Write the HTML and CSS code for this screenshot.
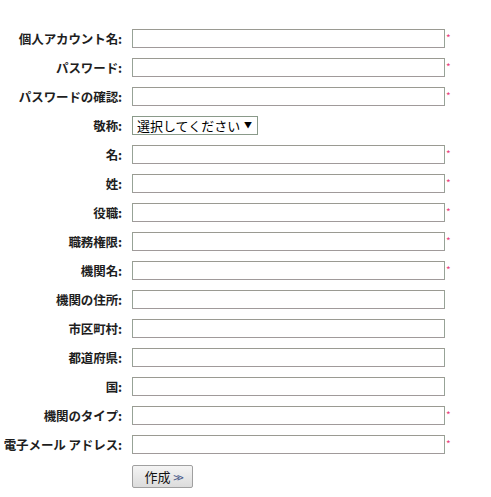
FILE: index.html
```html
<!DOCTYPE html>
<html lang="ja">
<head>
  <meta charset="UTF-8" />
  <title>アカウント作成</title>
  <link rel="stylesheet" href="styles.css">
</head>
<body>
  <form class="account-form">
    <label class="field-label">個人アカウント名:</label>
    <div class="field"><input type="text" class="text-input"><span class="req">*</span></div>

    <label class="field-label">パスワード:</label>
    <div class="field"><input type="password" class="text-input"><span class="req">*</span></div>

    <label class="field-label">パスワードの確認:</label>
    <div class="field"><input type="password" class="text-input"><span class="req">*</span></div>

    <label class="field-label">敬称:</label>
    <div class="field">
      <div class="select-wrap">
        <select class="select-input">
          <option>選択してください</option>
        </select>
      </div>
    </div>

    <label class="field-label">名:</label>
    <div class="field"><input type="text" class="text-input"><span class="req">*</span></div>

    <label class="field-label">姓:</label>
    <div class="field"><input type="text" class="text-input"><span class="req">*</span></div>

    <label class="field-label">役職:</label>
    <div class="field"><input type="text" class="text-input"><span class="req">*</span></div>

    <label class="field-label">職務権限:</label>
    <div class="field"><input type="text" class="text-input"><span class="req">*</span></div>

    <label class="field-label">機関名:</label>
    <div class="field"><input type="text" class="text-input"><span class="req">*</span></div>

    <label class="field-label">機関の住所:</label>
    <div class="field"><input type="text" class="text-input"></div>

    <label class="field-label">市区町村:</label>
    <div class="field"><input type="text" class="text-input"></div>

    <label class="field-label">都道府県:</label>
    <div class="field"><input type="text" class="text-input"></div>

    <label class="field-label">国:</label>
    <div class="field"><input type="text" class="text-input"></div>

    <label class="field-label">機関のタイプ:</label>
    <div class="field"><input type="text" class="text-input"><span class="req">*</span></div>

    <label class="field-label">電子メール アドレス:</label>
    <div class="field"><input type="text" class="text-input"><span class="req">*</span></div>

    <span></span>
    <div class="field actions">
      <button type="button" class="create-btn">作成 <span class="arrows">&gt;&gt;</span></button>
    </div>
  </form>
</body>
</html>
```

FILE: styles.css
```css
body {
  margin: 0;
  background: #fff;
  font-family: "Noto Sans CJK JP", "Noto Sans", sans-serif;
  color: #222;
}

.account-form {
  display: grid;
  grid-template-columns: 122px auto;
  column-gap: 10px;
  row-gap: 10px;
  padding-top: 29px;
}

.field-label {
  font-size: 12.5px;
  font-weight: bold;
  text-align: right;
  line-height: 19px;
  height: 19px;
  color: #1e1e1e;
  white-space: nowrap;
  letter-spacing: -0.1px;
}

.field {
  display: flex;
  align-items: flex-start;
  height: 19px;
}

.text-input {
  box-sizing: border-box;
  width: 313px;
  height: 19px;
  margin: 0;
  padding: 1px 3px;
  border: 1px solid #97a397;
  border-top-color: #9a9a92;
  border-bottom-color: #a09a9a;
  background: #fff;
  font-size: 12px;
  outline: none;
}

.req {
  color: #e8407a;
  font-size: 10px;
  line-height: 10px;
  margin-top: 4px;
  margin-left: 1px;
}

.select-wrap {
  position: relative;
  height: 19px;
}

.select-wrap::after {
  content: "▼";
  position: absolute;
  right: 6px;
  top: 4px;
  font-size: 8px;
  line-height: 10px;
  color: #000;
  pointer-events: none;
}

.select-input {
  display: block;
  appearance: none;
  -webkit-appearance: none;
  box-sizing: border-box;
  width: 126px;
  height: 19px;
  margin: 0;
  padding: 0 16px 0 4px;
  border: 1px solid #8a9a8a;
  border-radius: 0;
  background: #fff;
  color: #000;
  font-family: "Noto Sans CJK JP", sans-serif;
  font-size: 13px;
  line-height: 17px;
}

.actions {
  height: 23px;
  margin-top: 1px;
}

.create-btn {
  box-sizing: border-box;
  width: 61px;
  height: 23px;
  margin: 0;
  padding: 0;
  border: 1px solid #a0a0a0;
  border-radius: 2px;
  background: linear-gradient(#f4f4f4, #dcdcdc);
  font-family: "Noto Sans CJK JP", sans-serif;
  font-size: 13px;
  line-height: 21px;
  color: #111;
  cursor: pointer;
}

.create-btn .arrows {
  color: #4a5a8a;
  font-size: 12px;
  letter-spacing: -3px;
}
```
